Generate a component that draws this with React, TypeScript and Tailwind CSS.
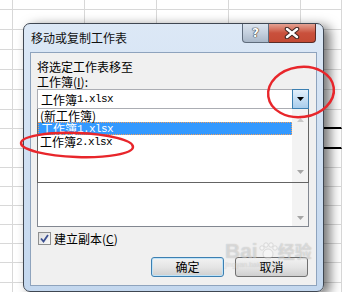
import React from "react";

const rowHeights = [10, 20, 20, 20, 20, 20, 19, 20, 19, 19, 19, 19, 19, 19, 20, 10];
const colCount = 6;

const zh = "font-['Noto_Sans_CJK_SC',sans-serif]";
const mono = "font-['Liberation_Mono',monospace] text-[11px] tracking-[-0.6px]";

// sheet behind the dialog
const Sheet = () => (
  <div className="grid grid-cols-[13px_72px_72px_72px_72px_41px] grid-rows-[10px_20px_20px_20px_20px_20px_19px_20px_19px_19px_19px_19px_19px_19px_20px_10px]">
    {rowHeights.map((_, r) =>
      Array.from({ length: colCount }).map((__, c) => (
        <div
          key={`${r}-${c}`}
          className={`border-r border-b border-[#d8d8d8] ${
            c === 5 && (r === 6 || r === 7) ? "border-b-2 border-b-black" : ""
          }`}
        />
      ))
    )}
  </div>
);

const Arrow = ({ up, faint }: { up?: boolean; faint?: boolean }) => (
  <svg width="7" height="4" viewBox="0 0 7 4">
    <path d={up ? "M0 4 L3.5 0 L7 4 Z" : "M0 0 L7 0 L3.5 4 Z"} fill={faint ? "#c8c8c8" : "#a6a6a6"} />
  </svg>
);

const Item = ({ name, ext, selected }: { name: string; ext?: string; selected?: boolean }) => (
  <div
    className={`h-[13px] flex items-center pl-[2px] leading-[12px] ${
      selected ? "bg-[#3399ff] text-white border border-dotted border-[#f0a060]" : "text-black"
    }`}
  >
    <span className="text-[12px] leading-[12px]">{name}</span>
    {ext && <span className={`${mono} leading-[12px]`}>{ext}</span>}
  </div>
);

export default function App() {
  return (
    <div className={`relative w-[342px] h-[292px] overflow-hidden bg-white ${zh}`}>
      <Sheet />

      {/* dialog window */}
      <div className="absolute left-[23px] top-[23px] w-[301px] h-[269px] rounded-[7px] border border-[#3f4752] bg-gradient-to-b from-[#dce8f6] to-[#c3d7ee] shadow-[6px_3px_12px_rgba(0,0,0,0.55)] flex flex-col">
        <div className="h-[28px] flex justify-between items-start">
          <span className="pl-[7px] pt-[6px] text-[12px] leading-[16px] text-[#111]">移动或复制工作表</span>
          <div className="flex mr-[7px] h-[19px]">
            <div className="w-[27px] h-full flex items-center justify-center rounded-bl-[4px] border border-t-0 border-[#5f6c7c] bg-gradient-to-b from-[#dbe4ee] via-[#c4d0de] to-[#aab8c9]">
              <span className="font-['DejaVu_Sans',sans-serif] font-bold text-[12px] leading-none text-white [text-shadow:0_0_1px_#333,0_0_1px_#333,0_0_1px_#333]">?</span>
            </div>
            <div className="w-[47px] h-full flex items-center justify-center rounded-br-[4px] border border-l-0 border-t-0 border-[#5a2b26] bg-gradient-to-b from-[#e3a192] via-[#c9503c] to-[#c44a34]">
              <svg width="16" height="12" viewBox="0 0 16 12">
                <path d="M3 2 L13 10 M13 2 L3 10" stroke="#3d2622" strokeWidth="4.5" strokeLinecap="round" />
                <path d="M3 2 L13 10 M13 2 L3 10" stroke="#fff" strokeWidth="2.5" strokeLinecap="round" />
              </svg>
            </div>
          </div>
        </div>

        {/* client area */}
        <div className="mx-[6px] h-[234px] border border-[#8ea3bd] bg-[#f0f0f0] pl-[6px] pt-[6px] flex flex-col text-[12px] leading-[15px] text-black">
          <span>将选定工作表移至</span>
          <span>
            工作簿(<span className="underline">I</span>):
          </span>

          {/* combo */}
          <div className="w-[272px] h-[20px] flex bg-white">
            <div className="flex-1 border border-r-0 border-[#abadb3] flex items-center pl-[3px]">
              <span>工作簿</span>
              <span className={mono}>1.xlsx</span>
            </div>
            <div className="w-[17px] h-full border border-[#3c7fb1] bg-gradient-to-b from-[#e3f0fb] to-[#a9cdec] flex items-center justify-center">
              <svg width="7" height="4" viewBox="0 0 7 4">
                <path d="M0 0 L7 0 L3.5 4 Z" fill="#000" />
              </svg>
            </div>
          </div>

          {/* list under popup */}
          <div className="relative w-[272px] h-[118px] bg-white border border-t-0 border-[#828790] flex">
            <div className="flex-1" />
            <div className="w-[16px] bg-[#f3f3f3] flex flex-col justify-end items-center pb-[6px]">
              <Arrow />
            </div>

            {/* dropdown popup */}
            <div className="absolute -left-px -right-px top-0 h-[74px] bg-white border border-t-0 border-[#646464] flex">
              <div className="flex-1">
                <Item name="(新工作簿)" />
                <Item name="工作簿" ext="1.xlsx" selected />
                <Item name="工作簿" ext="2.xlsx" />
              </div>
              <div className="w-[16px] bg-[#f3f3f3] flex flex-col justify-between items-center pt-[9px] pb-[8px]">
                <Arrow up faint />
                <Arrow />
              </div>
            </div>
          </div>

          {/* checkbox */}
          <div className="mt-[5px] ml-px flex items-center gap-[3px] h-[13px]">
            <div className="w-[13px] h-[13px] border border-[#8e8f8f] bg-gradient-to-br from-[#dcdcdc] to-[#fbfbfb] flex items-center justify-center">
              <svg width="9" height="9" viewBox="0 0 9 9">
                <path d="M1 4.5 L3.5 7.5 L8 1" stroke="#3b4f91" strokeWidth="1.8" fill="none" />
              </svg>
            </div>
            <span>
              建立副本(<span className="underline">C</span>)
            </span>
          </div>

          {/* buttons */}
          <div className="mt-[12px] w-[271px] flex justify-end gap-[11px]">
            <button className="w-[73px] h-[20px] rounded-[3px] border border-[#3c7fb1] bg-gradient-to-b from-[#f2f2f2] via-[#e5e5e5] to-[#cfcfcf] shadow-[inset_0_0_0_1px_#bfe3f8] text-[12px] leading-none">
              确定
            </button>
            <button className="w-[73px] h-[20px] rounded-[3px] border border-[#707070] bg-gradient-to-b from-[#f2f2f2] via-[#e5e5e5] to-[#cfcfcf] text-[12px] leading-none">
              取消
            </button>
          </div>
        </div>
      </div>

      {/* watermark */}
      <div className="absolute left-[225px] top-[240px] pointer-events-none flex flex-col leading-none">
        <div className="flex items-center text-[21px] font-bold text-white/45 [text-shadow:0_0_1px_rgba(0,0,0,0.25)]">
          <span className="font-['Liberation_Sans',sans-serif]">Bai</span>
          <svg width="20" height="20" viewBox="0 0 20 20" className="opacity-35">
            <circle cx="10" cy="13" r="5" fill="#fff" stroke="#999" strokeWidth="0.8" />
            <circle cx="4" cy="7" r="2.2" fill="#fff" stroke="#999" strokeWidth="0.8" />
            <circle cx="8" cy="4" r="2.2" fill="#fff" stroke="#999" strokeWidth="0.8" />
            <circle cx="13" cy="4" r="2.2" fill="#fff" stroke="#999" strokeWidth="0.8" />
            <circle cx="17" cy="7" r="2.2" fill="#fff" stroke="#999" strokeWidth="0.8" />
          </svg>
          <span className="text-[17px]">经验</span>
        </div>
        <span className="text-[7px] text-white/40 font-['Liberation_Sans',sans-serif] [text-shadow:0_0_1px_rgba(0,0,0,0.2)]">
          jingyan.baidu.com
        </span>
      </div>

      {/* red annotation marks */}
      <svg className="absolute inset-0 pointer-events-none" width="342" height="292" viewBox="0 0 342 292">
        <ellipse cx="301" cy="92" rx="33" ry="25" fill="none" stroke="#e8262b" strokeWidth="2.5" transform="rotate(-8 301 92)" />
        <ellipse cx="77" cy="145" rx="56" ry="12" fill="none" stroke="#e8262b" strokeWidth="2.5" transform="rotate(2 77 145)" />
      </svg>
    </div>
  );
}
